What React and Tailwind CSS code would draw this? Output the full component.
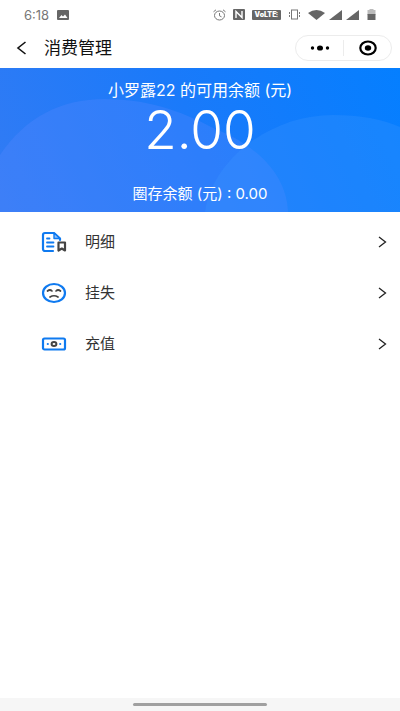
import React from 'react';

function DetailIcon() {
  return (
    <svg width="26" height="22" viewBox="0 0 26 22" fill="none" aria-hidden="true">
      <path
        d="M12 20H4A2 2 0 0 1 2 18V4A2 2 0 0 1 4 2H13L19 7.500V9"
        stroke="#0f7af0"
        strokeWidth="2.200"
        strokeLinecap="round"
        strokeLinejoin="round"
      />
      <path d="M13 2V7.500H19Z" fill="#8fc0fa" stroke="#0f7af0" strokeWidth="1.4" strokeLinejoin="round" />
      <path d="M6 7.500H8.500M6 11.500H12.500M6 15.500H12.500" stroke="#0f7af0" strokeWidth="1.8" strokeLinecap="round" />
      <path d="M17.500 11.500H24V19.500L20.800 17.500L17.500 19.500Z" stroke="#444" strokeWidth="2.200" strokeLinejoin="round" />
    </svg>
  );
}

function LossIcon() {
  return (
    <svg width="26" height="22" viewBox="0 0 26 22" fill="none" aria-hidden="true">
      <ellipse cx="13" cy="11" rx="11" ry="9" stroke="#0f7af0" strokeWidth="2.200" />
      <path
        d="M6.500 9Q9 7 11 9M15 9Q17 7 19.500 9M9 15Q13 12.500 17 15"
        stroke="#444"
        strokeWidth="1.7"
        strokeLinecap="round"
      />
    </svg>
  );
}

function RechargeIcon() {
  return (
    <svg width="26" height="22" viewBox="0 0 26 22" fill="none" aria-hidden="true">
      <rect x="2" y="5.500" width="22" height="11" rx="1.500" stroke="#0f7af0" strokeWidth="2.200" />
      <ellipse cx="13" cy="11" rx="2.400" ry="2" stroke="#444" strokeWidth="2" />
      <circle cx="6.800" cy="11" r="1.100" fill="#0f7af0" />
      <circle cx="19.200" cy="11" r="1.100" fill="#0f7af0" />
    </svg>
  );
}

const menuItems = [
  { label: '明细', Icon: DetailIcon },
  { label: '挂失', Icon: LossIcon },
  { label: '充值', Icon: RechargeIcon },
];

function StatusBar() {
  return (
    <div className="flex h-7 items-center justify-between pl-6 pr-6 pt-px text-[#666]">
      <div className="flex items-center gap-2">
        <span className="text-[13px] leading-4 text-[#777]">6:18</span>
        <svg width="12" height="10" viewBox="0 0 12 10" aria-hidden="true">
          <rect width="12" height="10" rx="1" fill="#666" />
          <path d="M2 8L4.5 5L6 6.5L8 4.5L10.5 8Z" fill="#fff" />
        </svg>
      </div>

      <div className="flex items-center gap-[7px]">
        {/* Alarm */}
        <svg width="13" height="12" viewBox="0 0 13 12" fill="none" stroke="#777" aria-hidden="true">
          <ellipse cx="6.5" cy="6.5" rx="5" ry="4.5" />
          <path d="M6.5 4V6.8L8.5 7.8M0.5 2.8L3 0.8M12.5 2.8L10 0.8" />
        </svg>
        {/* NFC */}
        <svg width="12" height="11" viewBox="0 0 12 11" aria-hidden="true">
          <rect width="12" height="11" rx="1" fill="#666" />
          <path d="M3 9V2.5L9 8.5V2" fill="none" stroke="#fff" strokeWidth="1.4" />
        </svg>
        <span className="flex h-[10px] w-[29px] items-center justify-center rounded-[1px] bg-[#666] text-[7px] font-black leading-none text-white">
          VoLTE⁝
        </span>
        {/* Vibrate */}
        <svg width="13" height="11" viewBox="0 0 13 11" fill="none" stroke="#777" aria-hidden="true">
          <rect x="3.5" y="1" width="6" height="9" />
          <path d="M1.5 3V8M11.5 3V8" strokeDasharray="2 1" />
        </svg>
        {/* Wifi, signals and battery */}
        <div className="flex items-center gap-1">
          <svg width="17" height="10" viewBox="0 0 17 10" aria-hidden="true">
            <path d="M0 3Q8.500 -3 17 3L8.500 10Z" fill="#666" />
          </svg>
          <svg width="13" height="10" viewBox="0 0 13 10" aria-hidden="true">
            <path d="M13 0V10H0Z" fill="#666" />
          </svg>
          <svg width="13" height="10" viewBox="0 0 13 10" aria-hidden="true">
            <path d="M13 0V10H0Z" fill="#666" />
          </svg>
          <svg className="ml-1" width="9" height="11" viewBox="0 0 9 11" aria-hidden="true">
            <path d="M2.500 0H6.500V1H8.500V6H0.500V1H2.500Z" fill="#bbb" />
            <path d="M0.500 5H8.500V11H0.500Z" fill="#666" />
          </svg>
        </div>
      </div>
    </div>
  );
}

function NavBar() {
  return (
    <header className="flex h-10 items-center justify-between pl-4 pr-2">
      <div className="flex items-center gap-4">
        <button type="button" aria-label="返回" className="flex h-5 w-3 items-center justify-center">
          <svg width="12" height="14" viewBox="0 0 12 14" fill="none" aria-hidden="true">
            <path d="M9.500 1L2 7L9.500 13" stroke="#111" strokeWidth="1.6" />
          </svg>
        </button>
        <h1 className="text-[17px] leading-6 text-[#111]">消费管理</h1>
      </div>

      <div className="flex h-[26px] w-[97px] items-center rounded-full border border-[#ececec]">
        <button type="button" aria-label="更多" className="flex h-4 flex-1 items-center justify-center border-r border-[#ececec]">
          <svg width="20" height="6" viewBox="0 0 20 6" aria-hidden="true">
            <circle cx="2.500" cy="3" r="1.700" />
            <ellipse cx="10" cy="3" rx="3" ry="2.600" />
            <circle cx="17.500" cy="3" r="1.700" />
          </svg>
        </button>
        <button type="button" aria-label="关闭" className="flex h-4 flex-1 items-center justify-center">
          <svg width="18" height="16" viewBox="0 0 18 16" aria-hidden="true">
            <ellipse cx="9" cy="8" rx="7.700" ry="6.500" fill="none" stroke="#000" strokeWidth="2.200" />
            <ellipse cx="9" cy="8" rx="3.200" ry="2.800" />
          </svg>
        </button>
      </div>
    </header>
  );
}

function BalanceBanner() {
  return (
    <section className="relative flex flex-col items-center overflow-hidden bg-linear-[65deg] from-[#327bf4] via-[#1a7afa] to-[#057fff] pt-3 pb-2 text-white">
      {/* Soft overlapping hills behind the balance */}
      <svg
        className="absolute inset-0 h-full w-full"
        viewBox="0 0 400 144"
        preserveAspectRatio="none"
        aria-hidden="true"
      >
        <path
          d="M0 87C25 50 60 31 105 31C145 31 180 42 213 60C255 76 287 106 288 144H0Z"
          fill="#5a88ff"
          fillOpacity="0.3"
        />
        <path d="M205 144C212 92 270 47 333 47C360 47 382 51 400 59V144Z" fill="#3c94ff" fillOpacity="0.3" />
      </svg>
      <p className="relative text-[16px] leading-5">小罗露22 的可用余额 (元)</p>
      <p className="relative text-[53px] font-light leading-[60px]">2.00</p>
      <p className="relative mt-6 text-[15px] leading-5">圈存余额 (元) : 0.00</p>
    </section>
  );
}

export default function App() {
  return (
    <div className="flex min-h-screen flex-col bg-white font-[Inter,'Noto_Sans_CJK_SC',sans-serif]">
      <StatusBar />
      <NavBar />
      <BalanceBanner />

      <main className="flex-1 pt-1">
        {menuItems.map(({ label, Icon }) => (
          <button key={label} type="button" className="flex h-[51px] w-full items-center pl-[41px] pr-3 text-left">
            <Icon />
            <span className="ml-[18px] flex-1 text-[15px] leading-5 text-[#333]">{label}</span>
            <svg width="12" height="12" viewBox="0 0 12 12" fill="none" aria-hidden="true">
              <path d="M3 1L9.500 6L3 11" stroke="#222" strokeWidth="1.300" />
            </svg>
          </button>
        ))}
      </main>

      <footer className="flex h-[13px] items-center justify-center bg-[#f6f6f6]">
        <div className="h-[3px] w-1/3 rounded-full bg-[#a0a0a0]" />
      </footer>
    </div>
  );
}
